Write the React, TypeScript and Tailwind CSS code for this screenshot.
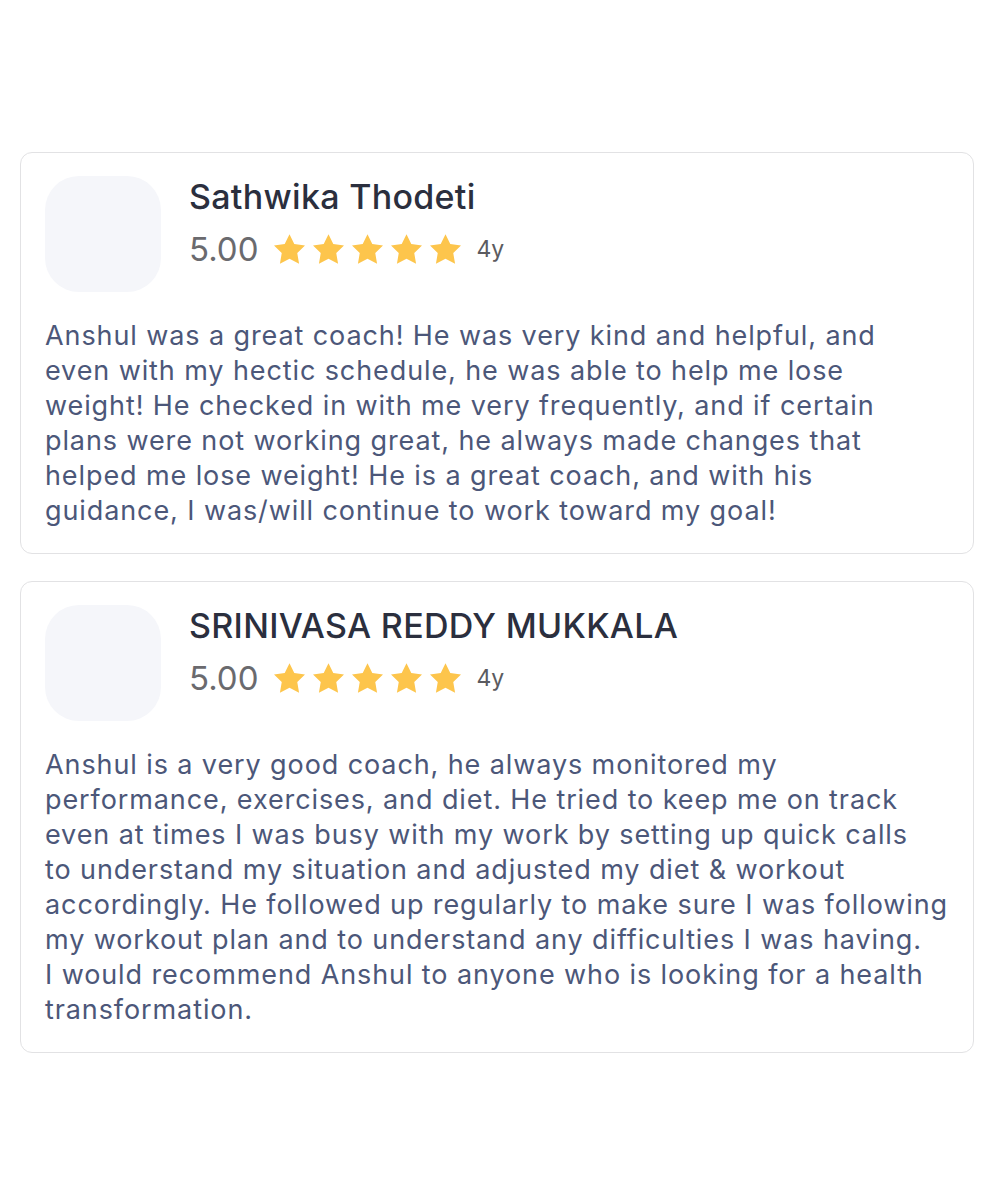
interface Review {
  id: number;
  name: string;
  rating: string;
  age: string;
  lines: string[];
}

const REVIEWS: Review[] = [
  {
    id: 1,
    name: 'Sathwika Thodeti',
    rating: '5.00',
    age: '4y',
    lines: [
      'Anshul was a great coach! He was very kind and helpful, and',
      'even with my hectic schedule, he was able to help me lose',
      'weight! He checked in with me very frequently, and if certain',
      'plans were not working great, he always made changes that',
      'helped me lose weight! He is a great coach, and with his',
      'guidance, I was/will continue to work toward my goal!',
    ],
  },
  {
    id: 2,
    name: 'SRINIVASA REDDY MUKKALA',
    rating: '5.00',
    age: '4y',
    lines: [
      'Anshul is a very good coach, he always monitored my',
      'performance, exercises, and diet. He tried to keep me on track',
      'even at times I was busy with my work by setting up quick calls',
      'to understand my situation and adjusted my diet & workout',
      'accordingly. He followed up regularly to make sure I was following',
      'my workout plan and to understand any difficulties I was having.',
      'I would recommend Anshul to anyone who is looking for a health',
      'transformation.',
    ],
  },
];

function StarIcon() {
  return (
    <svg width="31" height="30" viewBox="2 2 20 19.02" className="shrink-0">
      <path
        d="M12 2l3.09 6.26L22 9.27l-5 4.87 1.18 6.88L12 17.77l-6.18 3.25L7 14.14 2 9.27l6.91-1.01L12 2z"
        fill="#fdc54c"
      />
    </svg>
  );
}

function ReviewCard({ review }: { review: Review }) {
  return (
    <div className="border border-[#e2e2e4] rounded-[12px] bg-white pt-[23px] pb-[25px] px-[24px]">
      {/* Header */}
      <div className="flex items-start gap-[28px]">
        <div className="w-[116px] h-[116px] rounded-[34px] bg-[#f5f6fa] shrink-0" />
        <div className="flex flex-col pt-[1px]">
          <h3 className="text-[34px] leading-[40px] font-medium text-[#2b2f3e] tracking-[0.3px] whitespace-nowrap">
            {review.name}
          </h3>
          <div className="flex items-center mt-[14px]">
            <span className="text-[33px] leading-[36px] text-[#6a6a6e] mr-[16px]">{review.rating}</span>
            <div className="flex items-center gap-[8px]">
              {[0, 1, 2, 3, 4].map((i) => (
                <StarIcon key={i} />
              ))}
            </div>
            <span className="text-[23px] text-[#5b5b60] ml-[15px]">{review.age}</span>
          </div>
        </div>
      </div>

      {/* Body */}
      <p className="mt-[26px] text-[27px] leading-[35px] tracking-[0.9px] text-[#4c5779]">
        {review.lines.map((line, i) => (
          <span key={i} className="block whitespace-nowrap">
            {line}
          </span>
        ))}
      </p>
    </div>
  );
}

export default function App() {
  return (
    <div
      className="min-h-[1200px] bg-white pl-[20px] pr-[26px] pt-[152px] flex flex-col gap-[27px]"
      style={{ fontFamily: 'Inter, "Open Sans", sans-serif' }}
    >
      {REVIEWS.map((r) => (
        <ReviewCard key={r.id} review={r} />
      ))}
    </div>
  );
}
